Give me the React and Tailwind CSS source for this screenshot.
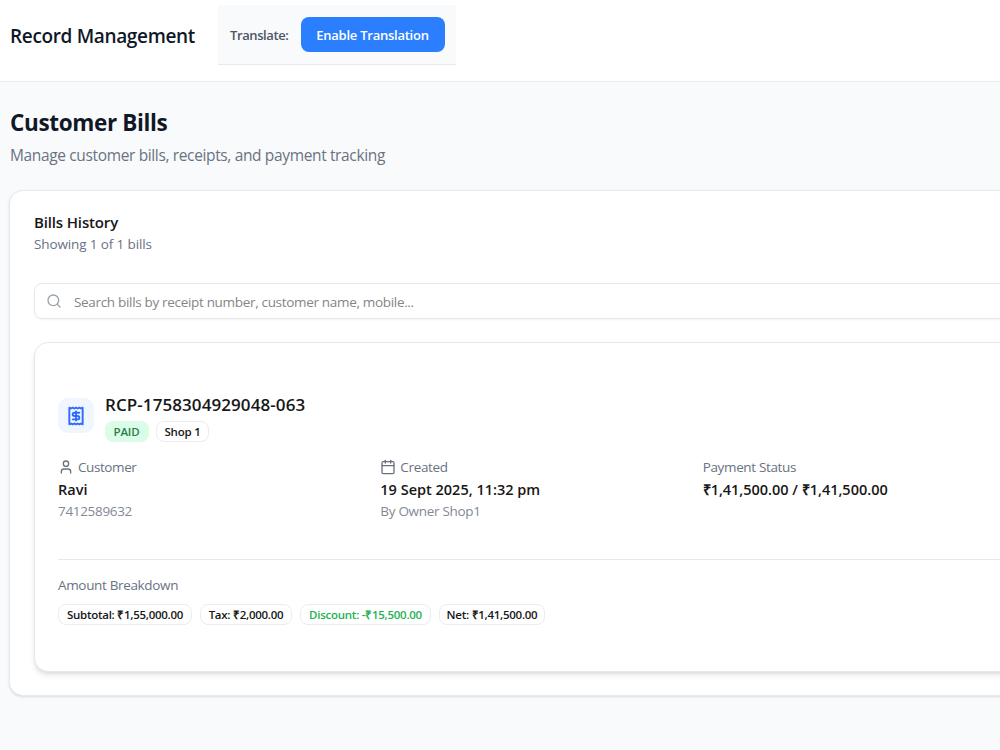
import { Calendar, Receipt, Search, User } from 'lucide-react'

const bill = {
  receipt: 'RCP-1758304929048-063',
  status: 'PAID',
  shop: 'Shop 1',
  customer: 'Ravi',
  mobile: '7412589632',
  created: '19 Sept 2025, 11:32 pm',
  createdBy: 'By Owner Shop1',
  payment: '₹1,41,500.00 / ₹1,41,500.00'
}

const amounts = [
  { text: 'Subtotal: ₹1,55,000.00', className: 'w-[134px] text-neutral-900' },
  { text: 'Tax: ₹2,000.00', className: 'w-[92px] text-neutral-900' },
  { text: 'Discount: -₹15,500.00', className: 'w-[131px] text-[#1fb155]' },
  { text: 'Net: ₹1,41,500.00', className: 'w-[106px] text-neutral-900' }
]

function Header() {
  return (
    <header className="flex h-[82px] items-start border-b border-[#eaecef] bg-white pl-[10px]">
      <div className="mt-[22px] w-[208px] whitespace-nowrap text-[19px] leading-7 font-semibold tracking-[-0.35px] text-gray-900">
        Record Management
      </div>
      <div className="mt-[5px] flex h-[60px] w-[238px] items-center border-b border-[#e8eaed] bg-gray-50 pl-3">
        <span className="w-[71px] whitespace-nowrap pt-0.5 text-[13px] font-semibold tracking-[-0.4px] text-gray-600">
          Translate:
        </span>
        <button className="h-[35px] w-[144px] whitespace-nowrap rounded-lg bg-[#2b7fff] pt-0.5 pr-px text-[13px] font-semibold tracking-[-0.25px] text-white">
          Enable Translation
        </button>
      </div>
    </header>
  )
}

function BillCard() {
  return (
    <div className="mt-[23px] h-[330px] rounded-[14px] border border-[#e8e8ea] bg-white pt-[51px] pl-[23px] shadow-md">
      <div className="flex gap-[11px]">
        <div className="mt-1 flex h-[35px] w-9 items-center justify-center rounded-[10px] bg-blue-50">
          <Receipt className="h-5 w-5 text-[#2f6bfd]" strokeWidth={2.3} />
        </div>
        <div>
          <h3 className="h-[27px] text-[17px] leading-[22px] font-semibold tracking-[0.08px] text-neutral-900">
            {bill.receipt}
          </h3>
          <div className="flex gap-[7px] whitespace-nowrap text-[11.5px] leading-none font-semibold">
            <span className="flex h-[21px] w-11 items-center justify-center rounded-lg bg-green-100 pt-px pr-px tracking-[-0.2px] text-[#2a7d4c]">
              {bill.status}
            </span>
            <span className="flex h-[21px] w-[53px] items-center justify-center rounded-lg border border-[#ececee] pt-px tracking-[-0.2px] text-neutral-900">
              {bill.shop}
            </span>
          </div>
        </div>
      </div>

      <div className="mt-[14px] h-[104px] border-b border-[#e8e8ea]">
        <div className="grid w-[967px] grid-cols-3 items-start whitespace-nowrap">
          <div>
            <p className="flex items-center gap-1 text-[13.5px] leading-[22px] tracking-[-0.42px] text-gray-500">
              <User className="h-4 w-4" />
              Customer
            </p>
            <p className="mt-px text-[14.5px] leading-[22px] font-semibold text-neutral-900">{bill.customer}</p>
            <p className="text-[13.5px] leading-[21px] tracking-[-0.32px] text-[#828995]">{bill.mobile}</p>
          </div>
          <div>
            <p className="flex items-center gap-1 text-[13.5px] leading-[22px] tracking-[-0.35px] text-gray-500">
              <Calendar className="h-4 w-4" />
              Created
            </p>
            <p className="mt-px text-[14.5px] leading-[22px] font-semibold text-neutral-900">{bill.created}</p>
            <p className="text-[13.5px] leading-[21px] tracking-[-0.3px] text-[#828995]">{bill.createdBy}</p>
          </div>
          <div>
            <p className="text-[13.5px] leading-[22px] tracking-[-0.35px] text-gray-500">Payment Status</p>
            <p className="mt-px text-[14.5px] leading-[22px] font-semibold tracking-[-0.02px] text-neutral-900">{bill.payment}</p>
          </div>
        </div>
      </div>

      <p className="mt-[15px] text-[13.5px] leading-[20px] tracking-[-0.34px] text-gray-500">Amount Breakdown</p>
      <div className="mt-[9px] flex gap-2">
        {amounts.map((amount) => (
          <span
            key={amount.text}
            className={`flex h-[21px] items-center justify-center rounded-lg border border-[#ececee] whitespace-nowrap text-[11.5px] font-semibold tracking-[-0.26px] ${amount.className}`}
          >
            {amount.text}
          </span>
        ))}
      </div>
    </div>
  )
}

export default function App() {
  return (
    <div className="h-[750px] w-full overflow-hidden bg-gray-50 font-['Open_Sans',sans-serif]">
      <Header />
      <main className="w-[1073px] pt-[25px] pl-[9px]">
        <h1 className="pl-px text-[22.5px] leading-8 font-bold tracking-[-0.35px] text-gray-900">Customer Bills</h1>
        <p className="mt-1 pl-px text-[15.5px] leading-6 tracking-[-0.36px] text-gray-500">
          Manage customer bills, receipts, and payment tracking
        </p>

        <section className="mt-[23px] h-[506px] rounded-[14px] border border-[#e8eaed] bg-white px-6 pt-5 shadow-sm">
          <h2 className="text-[15px] leading-[22px] font-semibold tracking-[-0.15px] text-neutral-900">Bills History</h2>
          <p className="mt-px text-[13.5px] leading-[21px] tracking-[-0.12px] text-gray-500">Showing 1 of 1 bills</p>

          <div className="mt-7 flex h-9 items-center rounded-lg border border-[#e8e8ea] pl-[11px] shadow-xs">
            <Search className="h-4 w-4 text-gray-400" />
            <input
              type="text"
              className="ml-3 flex-1 pt-0.5 text-[13.5px] tracking-[-0.32px] outline-none placeholder:text-[#858585]"
              placeholder="Search bills by receipt number, customer name, mobile..."
            />
          </div>

          <BillCard />
        </section>
      </main>
    </div>
  )
}
